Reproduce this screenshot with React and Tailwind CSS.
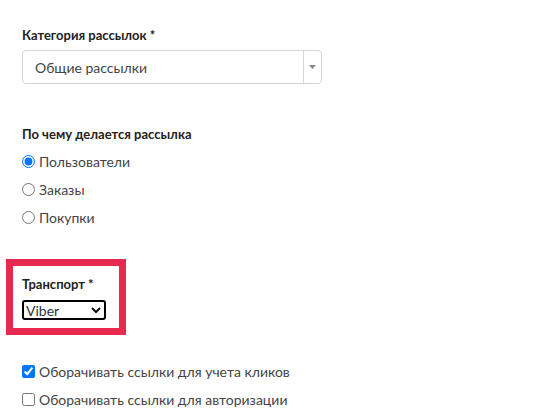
import React from "react";

export default function App() {
  const font = { fontFamily: "Lato, 'Open Sans', sans-serif" };
  return (
    <div className="w-[546px] h-[420px] bg-white text-[#333] overflow-hidden" style={font}>
      <div className="pl-[22px] pt-[26px]">
        <div className="text-[13px] font-bold leading-[18px] text-[#222]">Категория рассылок *</div>
        <div className="mt-[6px] w-[300px] h-[34px] border border-[#d6d6d6] rounded-[4px] flex items-stretch">
          <div className="flex-1 flex items-center pl-[12px] text-[14px] text-[#444]">Общие рассылки</div>
          <div className="w-[18px] border-l border-[#d6d6d6] flex items-center justify-center">
            <svg width="7" height="4" viewBox="0 0 7 4"><path d="M0 0h7L3.5 4z" fill="#888" /></svg>
          </div>
        </div>

        <div className="mt-[41px] text-[13px] font-bold leading-[18px] text-[#222]">По чему делается рассылка</div>
        <div className="mt-[9px] flex flex-col gap-[10px] text-[14px] text-[#444]">
          <label className="flex items-center h-[18px]">
            <input type="radio" name="r" defaultChecked className="w-[13px] h-[13px] m-0 mr-[4px] accent-[#0075ff]" />
            Пользователи
          </label>
          <label className="flex items-center h-[18px]">
            <input type="radio" name="r" className="w-[13px] h-[13px] m-0 mr-[4px]" />
            Заказы
          </label>
          <label className="flex items-center h-[18px]">
            <input type="radio" name="r" className="w-[13px] h-[13px] m-0 mr-[4px]" />
            Покупки
          </label>
        </div>

        <div className="mt-[33px] -ml-[16px] w-[120px] h-[76px] border-[7px] border-[#e8294f] pl-[9px] pt-[9px]">
          <div className="text-[13px] font-bold leading-[18px] text-[#222]">Транспорт *</div>
          <div className="mt-[7px] w-[84px] h-[20px] border-2 border-black rounded-[3px] flex items-center justify-between pl-[2px] pr-[3px] text-[14px] text-[#333]">
            <span>Viber</span>
            <svg width="10" height="7" viewBox="0 0 10 7"><path d="M1 1l4 4 4-4" stroke="#111" strokeWidth="2" fill="none" /></svg>
          </div>
        </div>

        <div className="mt-[27px] flex flex-col gap-[10px] text-[14px] text-[#444]">
          <label className="flex items-center h-[18px]">
            <input type="checkbox" defaultChecked className="w-[13px] h-[13px] m-0 mr-[4px] accent-[#0075ff]" />
            Оборачивать ссылки для учета кликов
          </label>
          <label className="flex items-center h-[18px]">
            <input type="checkbox" className="w-[13px] h-[13px] m-0 mr-[4px]" />
            Оборачивать ссылки для авторизации
          </label>
        </div>
      </div>
    </div>
  );
}
